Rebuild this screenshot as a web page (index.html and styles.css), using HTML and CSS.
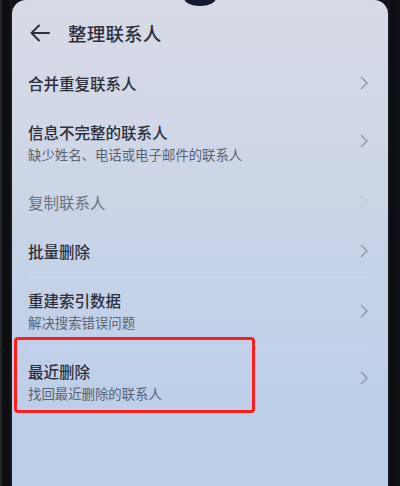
FILE: index.html
```html
<!DOCTYPE html>
<html lang="zh-CN">
<head>
<meta charset="utf-8">
<link rel="stylesheet" href="styles.css">
</head>
<body>
<div class="phone">
  <div class="bezel bezel-left"></div>
  <div class="screen">
    <div class="notch"></div>
    <header class="header">
      <svg class="back" width="20" height="18" viewBox="0 0 20 18"><path d="M1.5 9H19M9 1.5L1.5 9L9 16.5" fill="none" stroke="#2b303c" stroke-width="2" stroke-linecap="round" stroke-linejoin="round"/></svg>
      <h1 class="title">整理联系人</h1>
    </header>
    <div class="list">
      <div class="row r1"><div class="txt"><div class="main">合并重复联系人</div></div><svg class="chev" width="8" height="14" viewBox="0 0 8 14"><path d="M1 1L7 7L1 13" fill="none" stroke="#8c93a3" stroke-width="1.3"/></svg></div>
      <div class="row r2"><div class="txt"><div class="main">信息不完整的联系人</div><div class="sub">缺少姓名、电话或电子邮件的联系人</div></div><svg class="chev" width="8" height="14" viewBox="0 0 8 14"><path d="M1 1L7 7L1 13" fill="none" stroke="#8c93a3" stroke-width="1.3"/></svg></div>
      <div class="row r3"><div class="txt"><div class="main disabled">复制联系人</div></div><svg class="chev faint" width="8" height="14" viewBox="0 0 8 14"><path d="M1 1L7 7L1 13" fill="none" stroke="#c0c9d9" stroke-width="1.2"/></svg></div>
      <div class="row r4 sep"><div class="txt"><div class="main">批量删除</div></div><svg class="chev" width="8" height="14" viewBox="0 0 8 14"><path d="M1 1L7 7L1 13" fill="none" stroke="#8c93a3" stroke-width="1.3"/></svg></div>
      <div class="row r5 sep"><div class="txt"><div class="main">重建索引数据</div><div class="sub">解决搜索错误问题</div></div><svg class="chev" width="8" height="14" viewBox="0 0 8 14"><path d="M1 1L7 7L1 13" fill="none" stroke="#8c93a3" stroke-width="1.3"/></svg></div>
      <div class="row r6 sep"><div class="highlight"></div><div class="txt"><div class="main">最近删除</div><div class="sub">找回最近删除的联系人</div></div><svg class="chev" width="8" height="14" viewBox="0 0 8 14"><path d="M1 1L7 7L1 13" fill="none" stroke="#8c93a3" stroke-width="1.3"/></svg></div>
    </div>
  </div>
  <div class="bezel bezel-right"></div>
</div>
</body>
</html>
```
FILE: styles.css
```css
html, body {
  margin: 0;
  padding: 0;
  background: #111315;
}
body {
  width: 400px;
  height: 486px;
  overflow: hidden;
  font-family: "Noto Sans CJK SC", "Noto Sans", sans-serif;
}
.phone {
  display: flex;
  width: 400px;
  height: 486px;
}
.bezel {
  flex: none;
}
.bezel-left {
  width: 12px;
  background: linear-gradient(90deg, #2a2c30 0, #0c0d10 3px, #0c0d10 9px, #1c1f25 12px);
}
.bezel-right {
  width: 12px;
  background: linear-gradient(90deg, #1b1e24 0, #0b0c0f 3px, #101216 12px);
}
.screen {
  flex: 1;
  position: relative;
  border-radius: 14px 14px 0 0;
  background: linear-gradient(180deg, #d8dbe5 0, #d2d8e6 110px, #c6d3e7 260px, #bdcfe9 400px, #bcd0ea 486px);
  color: #2b303c;
  overflow: hidden;
}
.notch {
  position: absolute;
  left: 172px;
  top: -10px;
  width: 32px;
  height: 16px;
  border-radius: 50%;
  background: #161b33;
}
.header {
  height: 58px;
  display: flex;
  align-items: center;
  padding: 0 0 0 18px;
  box-sizing: border-box;
}
.header .back {
  margin-top: 8px;
  flex: none;
}
.title {
  margin: 8px 0 0 18px;
  font-size: 18.5px;
  font-weight: 500;
  letter-spacing: 0.2px;
  color: #2b303c;
}
.list {
  display: flex;
  flex-direction: column;
}
.row {
  position: relative;
  display: flex;
  align-items: center;
  padding: 0 20px 0 16px;
  box-sizing: border-box;
}
.row.sep::before {
  content: "";
  position: absolute;
  left: 16px;
  right: 20px;
  top: 0;
  height: 1px;
  background: rgba(220, 230, 244, 0.35);
}
.r1 { height: 49px; }
.r2 { height: 72px; }
.r3 { height: 46px; }
.r4 { height: 52px; }
.r5 { height: 68px; }
.r6 { height: 72px; }
.txt {
  flex: 1;
}
.main {
  font-size: 15.5px;
  line-height: 22px;
  font-weight: 500;
  color: #2b303c;
}
.main.disabled {
  color: #6b7281;
  font-weight: 400;
}
.sub {
  font-size: 13.4px;
  line-height: 22px;
  color: #5b6271;
}
.chev {
  flex: none;
}
.r2 .chev { margin-top: -4px; }
.r6 .chev { margin-top: -6px; }
.highlight {
  position: absolute;
  left: 2px;
  top: -8px;
  width: 241px;
  height: 76px;
  border: 3px solid #ff1c1c;
  border-radius: 4px;
  box-sizing: border-box;
}
.r6 .txt { margin-top: 2px; }
```
